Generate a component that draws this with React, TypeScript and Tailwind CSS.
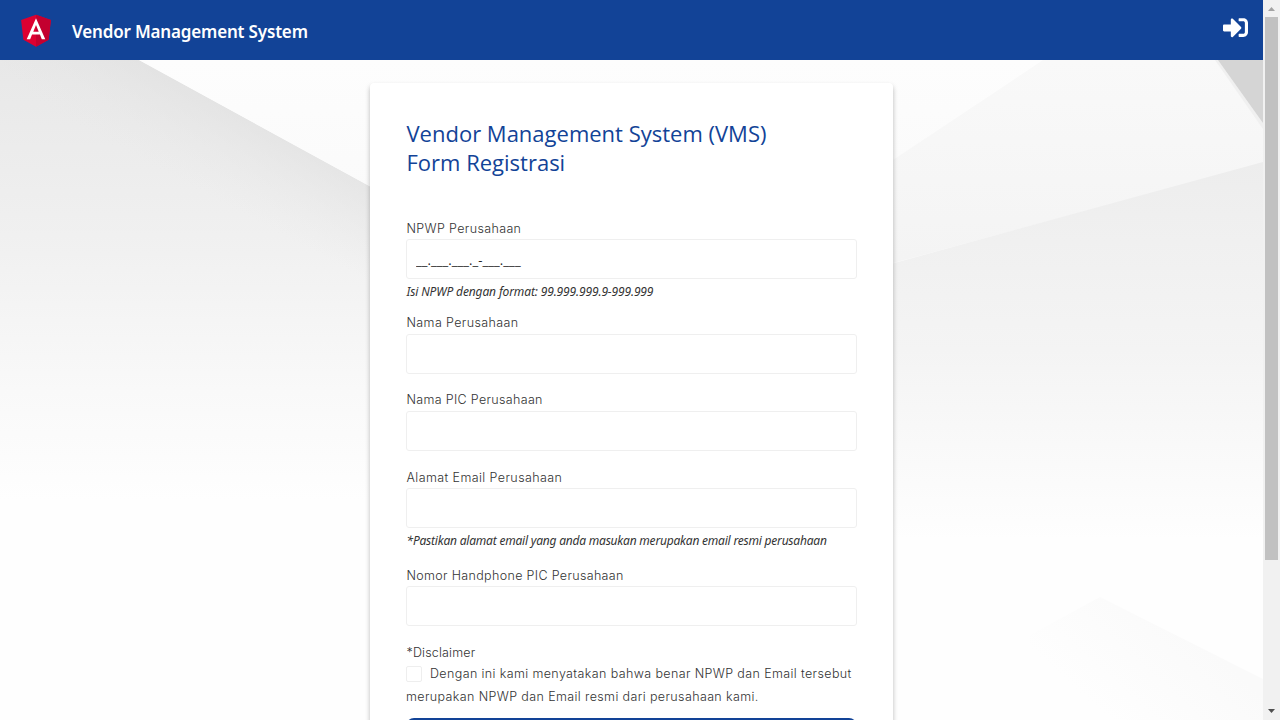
import { FaSignInAlt } from "react-icons/fa";

const labelFont = "font-['Inter',sans-serif] font-light text-[12.5px] text-[#333]";

function AngularLogo() {
  return (
    <svg viewBox="0 0 250 250" className="h-10 w-10 shrink-0" aria-hidden="true">
      <path fill="#dd0031" d="M125 30 31.9 63.2l14.2 123.1L125 230l78.9-43.7 14.2-123.1z" />
      <path fill="#c3002f" d="M125 30v200l78.9-43.7 14.2-123.1z" />
      <path
        fill="#fff"
        d="M125 52.1 66.8 182.6h21.7l11.7-29.2h49.4l11.7 29.2H183L125 52.1zm17 83.3h-34l17-40.9z"
      />
    </svg>
  );
}

function Backdrop() {
  return (
    <svg
      viewBox="0 0 1263 660"
      preserveAspectRatio="none"
      className="absolute inset-0 h-full w-full"
      aria-hidden="true"
    >
      <defs>
        <linearGradient id="left" x1="0" y1="0" x2="0" y2="440" gradientUnits="userSpaceOnUse">
          <stop offset="0" stopColor="#e8e8e8" />
          <stop offset="0.4" stopColor="#f0f0f0" />
          <stop offset="0.75" stopColor="#f9f9f9" />
          <stop offset="1" stopColor="#fefefe" />
        </linearGradient>
        <linearGradient id="edge" x1="255" y1="62" x2="214" y2="139" gradientUnits="userSpaceOnUse">
          <stop offset="0" stopColor="#e0e0e0" stopOpacity="0.6" />
          <stop offset="0.5" stopColor="#e4e4e4" stopOpacity="0.3" />
          <stop offset="1" stopColor="#e8e8e8" stopOpacity="0" />
        </linearGradient>
        <linearGradient id="mid" x1="0" y1="0" x2="0" y2="200" gradientUnits="userSpaceOnUse">
          <stop offset="0" stopColor="#fdfdfd" />
          <stop offset="1" stopColor="#f9f9f9" />
        </linearGradient>
        <linearGradient id="right" x1="0" y1="0" x2="0" y2="200" gradientUnits="userSpaceOnUse">
          <stop offset="0" stopColor="#f9f9f9" />
          <stop offset="1" stopColor="#f4f4f4" />
        </linearGradient>
        <linearGradient id="lower" x1="0" y1="100" x2="0" y2="480" gradientUnits="userSpaceOnUse">
          <stop offset="0" stopColor="#ededed" />
          <stop offset="0.5" stopColor="#f4f4f4" />
          <stop offset="1" stopColor="#fefefe" />
        </linearGradient>
        <linearGradient id="facet" x1="1110" y1="660" x2="1190" y2="570" gradientUnits="userSpaceOnUse">
          <stop offset="0" stopColor="#fafafa" stopOpacity="0" />
          <stop offset="1" stopColor="#fafafa" />
        </linearGradient>
      </defs>
      <path fill="#fefefe" d="M0 0h1263v660H0z" />
      <path fill="url(#left)" d="M0 0h139l492 269v391H0z" />
      <path fill="url(#edge)" d="M0 0h139l492 269v400z" />
      <path fill="url(#mid)" d="M139 0h904L631 274v-5z" />
      <path fill="url(#right)" d="M1043 0h220v103L631 274z" />
      <path fill="url(#lower)" d="M1263 102v558H631V275z" />
      <path fill="#f0f0f0" d="M1215 0h48v69z" />
      <path fill="#d5d5d5" d="M1218 0h45v63z" />
      <path fill="url(#facet)" d="M1030 575l70-38 163 82v41h-233z" />
    </svg>
  );
}

function Field({
  label,
  labelClass,
  placeholder,
  help,
  helpClass = "",
  space,
}: {
  label: string;
  labelClass: string;
  placeholder?: string;
  help?: string;
  helpClass?: string;
  space: string;
}) {
  return (
    <label className={`block ${space}`}>
      <span className={`block h-5 pl-[0.5px] whitespace-nowrap ${labelFont} ${labelClass}`}>{label}</span>
      <input
        type="text"
        placeholder={placeholder}
        className="block h-10 w-full rounded-[3px] border border-[#efefef] bg-white px-[9px] pt-[2px] font-['Open_Sans',sans-serif] text-[13px] tracking-[0.07px] text-[#222] placeholder:text-[#222]"
      />
      {help && (
        <span
          className={`block h-6 pl-[0.5px] font-['Noto_Sans',sans-serif] text-[12px] leading-[26px] whitespace-nowrap text-[#333] italic ${helpClass}`}
        >
          {help}
        </span>
      )}
    </label>
  );
}

function Scrollbar() {
  return (
    <div className="flex h-full w-[17px] shrink-0 flex-col items-center bg-[#f1f1f1]">
      <svg viewBox="0 0 17 17" className="h-[17px] w-[17px] shrink-0">
        <path fill="#a3a3a3" d="M5 11h7L8.500 7z" />
      </svg>
      <div className="h-[543px] w-[13px] bg-[#c1c1c1]" />
      <svg viewBox="0 0 17 17" className="mt-auto h-[17px] w-[17px] shrink-0">
        <path fill="#505050" d="M5 6h7l-3.500 4z" />
      </svg>
    </div>
  );
}

export default function App() {
  return (
    <div className="flex h-[720px] w-full overflow-hidden bg-white">
      <div className="flex min-w-0 flex-1 flex-col">
        <header className="flex h-[60px] shrink-0 items-center bg-[#124397] pr-[15px] pl-4 text-white">
          <AngularLogo />
          <h1 className="ml-4 flex-1 pt-1 font-['Noto_Sans',sans-serif] text-[17px] leading-6 font-semibold tracking-[-0.17px]">
            Vendor Management System
          </h1>
          <FaSignInAlt className="mb-[5px] h-[25px] w-[25px]" />
        </header>
        <main className="relative flex min-h-0 flex-1 items-start justify-center overflow-hidden pt-[23px]">
          <Backdrop />
          <form className="relative h-[860px] w-[523px] shrink-0 rounded-[4px] bg-white px-9 pt-9 shadow-[0_3px_5px_rgba(0,0,0,0.27)]">
            <h2 className="pl-[0.5px] font-['Open_Sans',sans-serif] text-[22px] leading-[29px] text-[#124397]">
              Vendor Management System (VMS)
              <br />
              Form Registrasi
            </h2>
            <Field
              space="mt-[42px]"
              label="NPWP Perusahaan"
              labelClass="leading-[20px] tracking-[0.36px]"
              placeholder="__.___.___._-___.___"
              help="Isi NPWP dengan format: 99.999.999.9-999.999"
              helpClass="tracking-[-0.13px]"
            />
            <Field
              space="mt-[11px]"
              label="Nama Perusahaan"
              labelClass="leading-[18px] tracking-[0.38px]"
            />
            <Field
              space="mt-[17px]"
              label="Nama PIC Perusahaan"
              labelClass="leading-[18px] tracking-[0.33px]"
            />
            <Field
              space="mt-[17px]"
              label="Alamat Email Perusahaan"
              labelClass="leading-[20px] tracking-[0.41px]"
              help="*Pastikan alamat email yang anda masukan merupakan email resmi perusahaan"
              helpClass="tracking-[-0.21px]"
            />
            <Field
              space="mt-[14px]"
              label="Nomor Handphone PIC Perusahaan"
              labelClass="leading-[20px] tracking-[0.34px]"
            />
            <div className={`mt-[17px] ${labelFont}`}>
              <p className="h-[19px] pl-[0.5px] leading-[20px] tracking-[0.17px]">*Disclaimer</p>
              <label className="block leading-[23px] tracking-[0.38px] whitespace-nowrap">
                <input
                  type="checkbox"
                  className="mr-2 inline-block h-4 w-4 appearance-none rounded-[2px] border border-[#eee] bg-white align-[-4px]"
                />
                <span>Dengan ini kami menyatakan bahwa benar NPWP dan Email tersebut</span>
                <br />
                <span>merupakan NPWP dan Email resmi dari perusahaan kami.</span>
              </label>
            </div>
            <button
              type="button"
              className="mt-[10px] block h-10 w-full rounded-lg bg-[#124397] font-['Open_Sans',sans-serif] text-sm text-white"
            />
          </form>
        </main>
      </div>
      <Scrollbar />
    </div>
  );
}
